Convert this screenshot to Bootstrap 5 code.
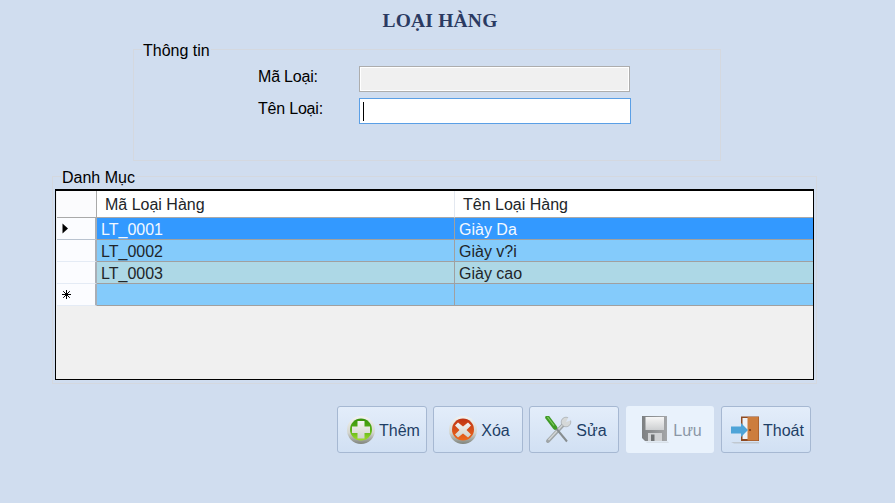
<!DOCTYPE html>
<html lang="en">

<head>
    <meta charset="UTF-8">
    <meta name="viewport" content="width=device-width, initial-scale=1.0">
    <title>Loại Hàng</title>
    <link href="https://cdn.jsdelivr.net/npm/bootstrap@5.3.0/dist/css/bootstrap.min.css" rel="stylesheet">
    <style>
        html, body {
            height: 100%;
        }

        body {
            background: #d0ddef;
            color: #000;
            font-family: "Liberation Sans", Arial, sans-serif;
            font-size: 16px;
            overflow: hidden;
        }

        .form-title {
            font-family: "Liberation Serif", "Times New Roman", serif;
            font-weight: 700;
            font-size: 19.5px;
            line-height: 22px;
            color: #2b3a62;
            margin: 0;
            padding-top: 10px;
            padding-right: 15px;
            height: 38px;
            text-align: center;
            letter-spacing: .2px;
        }

        .group-box {
            border: 1px solid #d4d8df;
            margin: 0;
            padding: 0;
            min-width: 0;
        }

        .group-box legend {
            float: none;
            width: auto;
            font-size: 16px;
            line-height: 20px;
            margin: 0 0 0 8px;
            padding: 3px 1px 0;
        }

        .group-info {
            width: 588px;
            height: 123px;
            margin-left: 133px;
        }

        .info-fields {
            padding: 5px 0 0 124px;
            gap: 6px;
        }

        .group-list {
            width: 765px;
            height: 219px;
            margin: 4px 0 0 52px;
        }

        .list-body {
            padding: 1px 0 0 2px;
        }

        .field-row {
            height: 26px;
        }

        .field-row label {
            width: 101px;
            margin: 0;
            padding-bottom: 4px;
            letter-spacing: -.2px;
        }

        .text-field {
            width: 271px;
            height: 26px;
            border: 1px solid #adadad;
            background: #f0f0f0;
            padding: 0 2px;
            box-shadow: inset 0 0 0 1px #fff;
        }

        .text-field.is-focused {
            width: 272px;
            border-color: #5a9fe6;
            background: #fff;
            box-shadow: none;
            display: flex;
            align-items: center;
        }

        .caret-bar {
            width: 1px;
            height: 19px;
            background: #000;
            margin-left: 1px;
        }

        .grid-box {
            width: 759px;
            height: 191px;
            border: 1px solid #000;
            border-top-width: 2px;
            background: #f0f0f0;
            padding-left: 1px;
        }

        .data-grid {
            width: 756px;
            table-layout: fixed;
            border-collapse: separate;
            border-spacing: 0;
            margin: 0;
            --bs-table-bg: transparent;
        }

        .data-grid th, .data-grid td {
            padding: 3px 0 0 4px;
            font-weight: 400;
            border: 0;
            border-right: 1px solid #a0a0a0;
            border-bottom: 1px solid #a0a0a0;
            line-height: 18px;
            height: 22px;
            white-space: nowrap;
            vertical-align: middle;
            box-shadow: none;
        }

        .data-grid thead th {
            height: 27px;
            background: #fff;
            padding: 2px 0 0 8px;
            line-height: 20px;
            border-right-color: #e3e8f0;
            border-bottom-color: #a9a9a9;
        }

        .data-grid .head-corner {
            padding: 0;
            border-right-color: #a9a9a9;
            background: #fbfbfd;
        }

        .data-grid .row-head {
            background: #fbfcff;
            border-right: 2px solid #a9aeb5;
            border-bottom: 1px solid #e4ebf5;
            padding: 0 0 0 5px;
            line-height: 0;
        }

        .data-grid .row-head.is-current {
            border-bottom-color: #b9c3d0;
        }

        .data-grid td:last-child, .data-grid th:last-child {
            border-right: 0;
        }

        .row-picked td:not(.row-head) {
            background: #3399ff;
            color: #f2f8ff;
        }

        .row-sky td:not(.row-head) {
            background: #84cbfb;
        }

        .row-pale td:not(.row-head) {
            background: #add8e6;
        }

        .action-bar {
            margin: 22px 0 0 337px;
            gap: 6px;
        }

        .tool-btn {
            width: 90px;
            height: 47px;
            padding: 0 0 0 3px;
            border: 1px solid #a6b8d2;
            border-radius: 3px;
            background: linear-gradient(to bottom, #e3edfa, #d1e0f3);
            color: #1e3f66;
            font-size: 16px;
            gap: 4px;
        }

        .tool-btn span {
            padding-top: 2px;
        }

        .tool-btn:disabled {
            width: 88px;
            margin-left: 1px;
            margin-right: 1px;
            border-color: transparent;
            background: #e9f2fc;
            color: #8b97a6;
            opacity: 1;
        }

        .tool-btn svg {
            flex: none;
        }
    </style>
</head>

<body>

    <h1 class="form-title">LOẠI HÀNG</h1>

    <fieldset class="group-box group-info">
        <legend>Thông tin</legend>
        <div class="info-fields d-flex flex-column">
            <div class="field-row d-flex align-items-center">
                <label>Mã Loại:</label>
                <div class="text-field"></div>
            </div>
            <div class="field-row d-flex align-items-center">
                <label>Tên Loại:</label>
                <div class="text-field is-focused"><span class="caret-bar"></span></div>
            </div>
        </div>
    </fieldset>

    <fieldset class="group-box group-list">
        <legend>Danh Mục</legend>
        <div class="list-body">
            <div class="grid-box">
                <table class="table data-grid">
                    <colgroup>
                        <col style="width: 40px">
                        <col style="width: 358px">
                        <col>
                    </colgroup>
                    <thead>
                        <tr>
                            <th class="head-corner"></th>
                            <th>Mã Loại Hàng</th>
                            <th>Tên Loại Hàng</th>
                        </tr>
                    </thead>
                    <tbody>
                        <tr class="row-picked">
                            <td class="row-head is-current">
                                <svg width="7" height="11" viewBox="0 0 7 11"><path d="M0.5 0.5 L6 5.5 L0.5 10.5 Z" fill="#000"/></svg>
                            </td>
                            <td>LT_0001</td>
                            <td>Giày Da</td>
                        </tr>
                        <tr class="row-sky">
                            <td class="row-head"></td>
                            <td>LT_0002</td>
                            <td>Giày v?i</td>
                        </tr>
                        <tr class="row-pale">
                            <td class="row-head"></td>
                            <td>LT_0003</td>
                            <td>Giày cao</td>
                        </tr>
                        <tr class="row-sky">
                            <td class="row-head">
                                <svg width="9" height="9" viewBox="0 0 9 9" stroke="#000" stroke-width="1"><path d="M4.5 0 V9 M0 4.5 H9 M1.2 1.2 L7.8 7.8 M7.8 1.2 L1.2 7.8"/></svg>
                            </td>
                            <td></td>
                            <td></td>
                        </tr>
                    </tbody>
                </table>
            </div>
        </div>
    </fieldset>

    <div class="action-bar d-flex">
        <button type="button" class="btn tool-btn d-flex align-items-center justify-content-center">
            <svg width="28" height="28" viewBox="0 0 28 28">
                <defs>
                    <linearGradient id="ringGrad" x1="0" y1="0" x2="0" y2="1"><stop offset="0" stop-color="#f2f3f1"/><stop offset=".6" stop-color="#d4d6d0"/><stop offset="1" stop-color="#7f837b"/></linearGradient>
                    <linearGradient id="greenGrad" x1="0" y1="0" x2="0" y2="1"><stop offset="0" stop-color="#37920c"/><stop offset=".55" stop-color="#5cb418"/><stop offset="1" stop-color="#a2dc2c"/></linearGradient>
                    <linearGradient id="redGrad" x1="0" y1="0" x2="0" y2="1"><stop offset="0" stop-color="#bf3414"/><stop offset="1" stop-color="#ee6a1c"/></linearGradient>
                    <linearGradient id="markGrad" x1="0" y1="0" x2="0" y2="1"><stop offset="0" stop-color="#f4f4f2"/><stop offset="1" stop-color="#cfd2cc"/></linearGradient>
                    <linearGradient id="labelGrad" x1="0" y1="0" x2="0" y2="1"><stop offset="0" stop-color="#f6f6f6"/><stop offset="1" stop-color="#cdcfd1"/></linearGradient>
                    <linearGradient id="bodyGrad" x1="0" y1="0" x2="1" y2="0"><stop offset="0" stop-color="#7d8082"/><stop offset="1" stop-color="#a4a6a8"/></linearGradient>
                </defs>
                <circle cx="14" cy="14" r="14" fill="url(#ringGrad)"/>
                <circle cx="14" cy="13.5" r="11" fill="url(#greenGrad)"/>
                <path d="M10.5 5 H17.5 V10.5 H23 V17 H17.5 V22.5 H10.5 V17 H5 V10.5 H10.5 Z" fill="url(#markGrad)"/>
            </svg>
            <span>Thêm</span>
        </button>
        <button type="button" class="btn tool-btn d-flex align-items-center justify-content-center">
            <svg width="28" height="28" viewBox="0 0 28 28">
                <circle cx="14" cy="14" r="14" fill="url(#ringGrad)"/>
                <circle cx="14" cy="13.5" r="11" fill="url(#redGrad)"/>
                <path d="M9 6.5 L14 10.5 L19 6.5 L22 9.5 L17.5 14 L22 18.5 L19 21.5 L14 17.5 L9 21.5 L6 18.5 L10.5 14 L6 9.5 Z" fill="url(#markGrad)"/>
            </svg>
            <span>Xóa</span>
        </button>
        <button type="button" class="btn tool-btn d-flex align-items-center justify-content-center">
            <svg width="28" height="28" viewBox="0 0 28 28">
                <path d="M4 25 L20 8" stroke="#9fa5a7" stroke-width="4" stroke-linecap="round"/>
                <path d="M4.5 24 L19.5 8" stroke="#d3d6d6" stroke-width="1.4"/>
                <circle cx="22" cy="6" r="4.8" fill="#d5d8d8" stroke="#9aa0a2" stroke-width=".6"/>
                <path d="M22 6 L25 0 L28 4 Z" fill="#dde8f7"/>
                <path d="M11 11 L23 25.5" stroke="#878d8f" stroke-width="2"/>
                <path d="M3.5 1.5 L11 11.5" stroke="#3f9a26" stroke-width="4.5" stroke-linecap="round"/>
                <path d="M3.5 1 L10 9.5" stroke="#82cc62" stroke-width="1.2"/>
            </svg>
            <span>Sửa</span>
        </button>
        <button type="button" class="btn tool-btn d-flex align-items-center justify-content-center" disabled>
            <svg width="28" height="28" viewBox="0 0 28 28">
                <path d="M1 0 H26 V25 H4 L1 22 Z" fill="url(#bodyGrad)"/>
                <path d="M4.5 1 H23 V14 H4.5 Z" fill="url(#labelGrad)"/>
                <path d="M7 17 H21 V25 H7 Z" fill="#d0d2d4"/>
                <path d="M10 18.5 H13.5 V25 H10 Z" fill="#6f7274"/>
                <path d="M4 25.5 H27 L28 27 H6 Z" fill="#d8e0e8"/>
            </svg>
            <span>Lưu</span>
        </button>
        <button type="button" class="btn tool-btn d-flex align-items-center justify-content-center">
            <svg width="28" height="28" viewBox="0 0 28 28">
                <path d="M0 26 H28 V27.5 H3 Z" fill="#c0c8d0"/>
                <path d="M10 0.5 H28 V25 H10 Z" fill="#8e4a22"/>
                <path d="M11.5 2 H17 V23 H11.5 Z" fill="#eef2f6"/>
                <path d="M16.5 1 H27.5 V24.5 L16.5 24.5 Z" fill="#cc7d3e"/>
                <circle cx="19" cy="14" r="1.1" fill="#7a3f1a"/>
                <path d="M0 10.5 H10 V7 L17 14 L10 21 V17.5 H0 Z" fill="#4ea4d8"/>
            </svg>
            <span>Thoát</span>
        </button>
    </div>

    <script src="https://cdn.jsdelivr.net/npm/bootstrap@5.3.0/dist/js/bootstrap.bundle.min.js"></script>
</body>

</html>
